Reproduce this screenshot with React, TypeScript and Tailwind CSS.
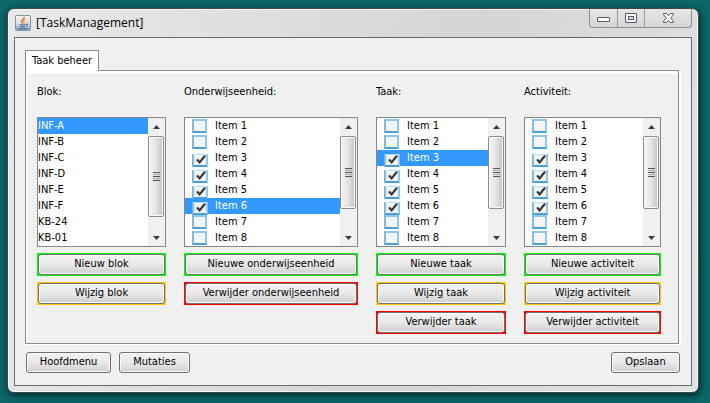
import { useState } from "react";
import type { ReactNode } from "react";

type Tone = "green" | "amber" | "red";

const TONES: Record<Tone, string> = {
  green: "bg-[#00fa00]",
  amber: "bg-[#ffc800]",
  red: "bg-[#ff0000]",
};

const FACE =
  "rounded-[3px] border border-[#707070] bg-linear-to-b from-[#f2f2f2] from-0% via-[#e9e9e9] via-50% to-[#cfcfcf] shadow-[inset_0_0_0_1px_#fbfbfb] whitespace-nowrap";

function ActionButton({ tone, children }: { tone: Tone; children: ReactNode }) {
  return (
    <div className={`flex h-[23px] p-px ${TONES[tone]}`}>
      <button type="button" className={`flex-1 ${FACE}`}>
        {children}
      </button>
    </div>
  );
}

function PlainButton({ width, children }: { width: string; children: ReactNode }) {
  return (
    <button type="button" className={`h-[21px] ${width} ${FACE}`}>
      {children}
    </button>
  );
}

function Arrow({ down = false }: { down?: boolean }) {
  return (
    <svg viewBox="0 0 7 4" className="h-1 w-[7px]" aria-hidden="true">
      <path d={down ? "M0 0h7L3.5 4z" : "M0 4h7L3.5 0z"} fill="#3c3c3c" />
    </svg>
  );
}

function ScrollBar({ thumb }: { thumb: string }) {
  return (
    <div className="flex w-[17px] shrink-0 flex-col bg-[#f0f0f0] pr-px" aria-hidden="true">
      <div className="flex h-[18px] items-center justify-center">
        <Arrow />
      </div>
      <div
        className={`flex ${thumb} flex-col items-center justify-center gap-px rounded-[2px] border border-[#8e8e8e] bg-linear-to-r from-[#f6f6f6] via-[#e4e4e6] to-[#c4c4c8] shadow-[inset_0_0_0_1px_#f8f8f8]`}
      >
        <span className="h-px w-[7px] bg-[#555]" />
        <span className="h-px w-[7px] bg-[#aaa]" />
        <span className="h-px w-[7px] bg-[#555]" />
        <span className="h-px w-[7px] bg-[#aaa]" />
        <span className="h-px w-[7px] bg-[#555]" />
      </div>
      <div className="flex-1" />
      <div className="flex h-[17px] items-center justify-center">
        <Arrow down />
      </div>
    </div>
  );
}

function Column({
  title,
  thumb,
  list,
  children,
}: {
  title: string;
  thumb: string;
  list: ReactNode;
  children: ReactNode;
}) {
  return (
    <section className="flex min-w-0 flex-col gap-1.5">
      <h2 className="mb-[11px] h-4 leading-4">{title}</h2>
      <div className="flex border border-[#828790] bg-white">
        {list}
        <ScrollBar thumb={thumb} />
      </div>
      {children}
    </section>
  );
}

const BLOCKS = ["INF-A", "INF-B", "INF-C", "INF-D", "INF-E", "INF-F", "KB-24", "KB-01"];
const ITEMS = ["Item 1", "Item 2", "Item 3", "Item 4", "Item 5", "Item 6", "Item 7", "Item 8"];

function BlockList() {
  const [selected, setSelected] = useState("INF-A");
  return (
    <ul className="min-w-0 flex-1">
      {BLOCKS.map((name) => (
        <li key={name} className="flex">
          <button
            type="button"
            onClick={() => setSelected(name)}
            className={`h-4 flex-1 text-left leading-4 ${
              name === selected ? "bg-[#3399ff] text-white" : ""
            }`}
          >
            {name}
          </button>
        </li>
      ))}
    </ul>
  );
}

function CheckList({ group, selected }: { group: string; selected?: string }) {
  const [checked, setChecked] = useState(["Item 3", "Item 4", "Item 5", "Item 6"]);
  const toggle = (name: string) =>
    setChecked((old) => (old.includes(name) ? old.filter((n) => n !== name) : [...old, name]));
  return (
    <ul className="min-w-0 flex-1">
      {ITEMS.map((name) => {
        const id = `${group}-${name.replace(" ", "-")}`;
        const on = checked.includes(name);
        return (
          <li
            key={name}
            className={`flex h-4 pl-[7px] ${name === selected ? "bg-[#3399ff] text-white" : ""}`}
          >
            <span className="relative h-4 w-[23px]">
              <input
                id={id}
                type="checkbox"
                checked={on}
                onChange={() => toggle(name)}
                className="absolute top-px left-0 h-[14px] w-[15px] appearance-none border-2 border-t-[#8cc6ea] border-r-[#8fcaec] border-b-[#4a9fd6] border-l-[#7cbce6] bg-[#f4f4f4] checked:top-1 checked:h-[13px] checked:w-4 checked:border-t checked:border-t-[#b9dcf2]"
              />
              {on && (
                <svg
                  viewBox="0 0 10 10"
                  className="pointer-events-none absolute top-[5px] left-1 size-2.5"
                  aria-hidden="true"
                >
                  <path
                    d="M1 4.4 3.6 7.4 9 0.8"
                    fill="none"
                    stroke="#343434"
                    strokeWidth="2.2"
                  />
                </svg>
              )}
            </span>
            <label htmlFor={id} className="flex-1 leading-4">
              {name}
            </label>
          </li>
        );
      })}
    </ul>
  );
}

function JavaIcon() {
  return (
    <svg viewBox="0 0 16 16" className="size-4" aria-hidden="true">
      <defs>
        <linearGradient id="java-tile" x1="0" y1="0" x2="0" y2="1">
          <stop offset="0" stopColor="#f4f6f8" />
          <stop offset="0.55" stopColor="#d3dde6" />
          <stop offset="1" stopColor="#7899b8" />
        </linearGradient>
      </defs>
      <rect x="0.5" y="0.5" width="15" height="15" rx="1" fill="url(#java-tile)" stroke="#7d93a8" />
      <path
        d="M9.2 1.8C10 3.8 5.800 4.400 6.600 6.600 6.900 7.300 7.800 7.600 7.700 8.600"
        fill="none"
        stroke="#e8791c"
        strokeWidth="1.5"
      />
      <path d="M10.600 4C8.600 5 8.200 5.800 9 7 9.300 7.500 9.100 8 8.600 8.500" fill="none" stroke="#e8791c" />
      <path
        d="M4.500 9.500C6 10.200 9 10.100 10.800 9.500M5.200 11.300C6.700 12 8.700 11.900 10 11.400M3.300 13.200C5.700 14.200 10 14.100 12.300 13.200M11 9.200C13 8.600 13.400 10.500 11.300 11.500"
        fill="none"
        stroke="#3d658d"
      />
    </svg>
  );
}

function WindowControls() {
  const cell = "flex items-center justify-center border-r border-[#9b9b9b]";
  return (
    <div className="flex h-[19px] self-start overflow-hidden rounded-b-[4px] border border-t-0 border-[#8f8f8f] bg-linear-to-b from-[#e6e6e6] to-[#d6d6d6]">
      <button type="button" aria-label="Minimaliseren" className={`w-7 ${cell}`}>
        <svg viewBox="0 0 13 11" className="h-[11px] w-[13px]" aria-hidden="true">
          <rect x="0.5" y="4.5" width="12" height="4" rx="0.5" fill="#fff" stroke="#565b6a" />
        </svg>
      </button>
      <button type="button" aria-label="Maximaliseren" className={`w-[27px] ${cell}`}>
        <svg viewBox="0 0 13 11" className="h-[11px] w-[13px]" aria-hidden="true">
          <rect x="0.5" y="0.5" width="11" height="9" rx="0.5" fill="#fff" stroke="#565b6a" />
          <rect x="3.5" y="3.5" width="5" height="3" fill="#e2e2e2" stroke="#565b6a" />
        </svg>
      </button>
      <button type="button" aria-label="Sluiten" className="flex w-[46px] items-center justify-center">
        <svg viewBox="0 0 13 11" className="h-[11px] w-[13px]" aria-hidden="true">
          <path
            d="M1.500 0.500H4.600L6.500 2.700 8.400 0.500H11.500V1.700L8.700 5 11.500 8.300V9.500H8.400L6.500 7.300 4.600 9.500H1.500V8.300L4.300 5 1.500 1.700z"
            fill="#fff"
            stroke="#565b6a"
          />
        </svg>
      </button>
    </div>
  );
}

export default function App() {
  return (
    <div className="flex min-h-screen bg-[#0d6668] pt-2 pr-[11px] pb-2.5 pl-[7px] font-['DejaVu_Sans_Condensed','DejaVu_Sans',sans-serif] text-[11px] text-black">
      <main className="flex min-w-0 flex-1 flex-col rounded-[7px] border border-[#3f4a4b] bg-linear-105 from-[#e9e9e9] from-0% via-[#d5d5d5] via-60% to-[#e2e2e2] px-1.5 pb-1.5 shadow-[inset_0_0_0_1px_#f6f6f6,1px_2px_6px_1px_rgba(0,0,0,0.55)]">
        <header className="flex h-7 justify-between pl-px">
          <div className="flex items-center gap-[5px] font-['Open_Sans','Noto_Sans',sans-serif] text-xs">
            <JavaIcon />
            <h1>[TaskManagement]</h1>
          </div>
          <WindowControls />
        </header>

        <div className="flex flex-1 flex-col border border-[#6b6b6b] bg-[#f0f0f0] px-2.5 pt-3 pb-3">
          <div role="tablist" className="flex">
            <button
              type="button"
              role="tab"
              aria-selected="true"
              className="relative -mb-px h-[21px] w-[74px] border border-b-0 border-[#898c95] bg-white"
            >
              Taak beheer
            </button>
          </div>

          <div className="flex flex-1 bg-white pr-0.5 pb-px">
            <div
              role="tabpanel"
              className="flex min-w-0 flex-1 border border-[#898c95] bg-white pt-[3px] pl-px"
            >
              <div className="grid min-w-0 flex-1 grid-cols-[129fr_174fr_130fr_137fr] content-start gap-x-[18px] bg-[#f0f0f0] pt-2.5 pr-[17px] pb-[9px] pl-2.5">
                <Column title="Blok:" thumb="h-[81px]" list={<BlockList />}>
                  <ActionButton tone="green">Nieuw blok</ActionButton>
                  <ActionButton tone="amber">Wijzig blok</ActionButton>
                </Column>
                <Column
                  title="Onderwijseenheid:"
                  thumb="h-[73px]"
                  list={<CheckList group="onderwijseenheid" selected="Item 6" />}
                >
                  <ActionButton tone="green">Nieuwe onderwijseenheid</ActionButton>
                  <ActionButton tone="red">Verwijder onderwijseenheid</ActionButton>
                </Column>
                <Column
                  title="Taak:"
                  thumb="h-[73px]"
                  list={<CheckList group="taak" selected="Item 3" />}
                >
                  <ActionButton tone="green">Nieuwe taak</ActionButton>
                  <ActionButton tone="amber">Wijzig taak</ActionButton>
                  <ActionButton tone="red">Verwijder taak</ActionButton>
                </Column>
                <Column title="Activiteit:" thumb="h-[73px]" list={<CheckList group="activiteit" />}>
                  <ActionButton tone="green">Nieuwe activiteit</ActionButton>
                  <ActionButton tone="amber">Wijzig activiteit</ActionButton>
                  <ActionButton tone="red">Verwijder activiteit</ActionButton>
                </Column>
              </div>
            </div>
          </div>

          <footer className="flex gap-2 pt-[7px] pr-px pl-px">
            <PlainButton width="w-[85px]">Hoofdmenu</PlainButton>
            <PlainButton width="w-[71px]">Mutaties</PlainButton>
            <div className="flex-1" />
            <PlainButton width="w-[69px]">Opslaan</PlainButton>
          </footer>
        </div>
      </main>
    </div>
  );
}
